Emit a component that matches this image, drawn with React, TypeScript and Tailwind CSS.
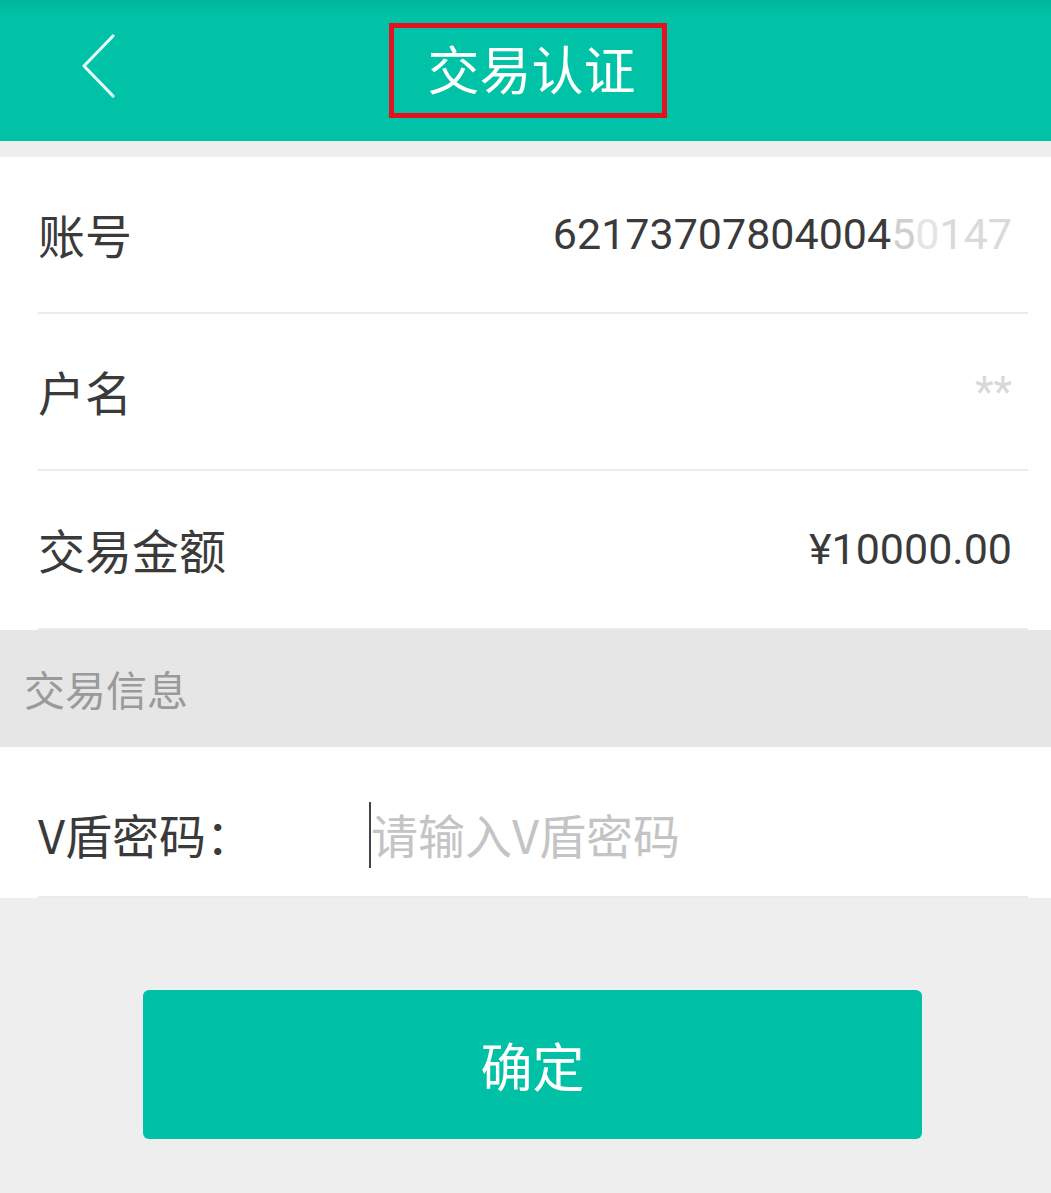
const cjk = "font-['Noto_Sans_CJK_SC',sans-serif]";

function InfoRow({ label, children, last }: { label: string; children: React.ReactNode; last?: boolean }) {
    return (
        <div className="bg-white pr-[23px] pl-[38px]">
            <div className={`flex h-[157px] items-center justify-between ${last ? '' : 'border-b-2 border-[#ebebeb]'}`}>
                <span className={`${cjk} text-[47px] text-[#3a3a3a]`}>{label}</span>
                <span className="pr-4 font-['Roboto',sans-serif] text-[43px] text-[#3a3a3a]">{children}</span>
            </div>
        </div>
    );
}

export default function App() {
    return (
        <div className={`flex min-h-[1193px] w-full flex-col bg-[#eeeeee] ${cjk}`}>
            {/* Header */}
            <header className="relative flex h-[141px] items-center justify-center bg-gradient-to-b from-[#00b59c] to-[#00c2a6] to-[12%]">
                <svg className="absolute top-[33px] left-[80px]" width="38" height="66" viewBox="0 0 38 66" fill="none">
                    <polyline points="33,3 4,33 33,63" stroke="#e6fbf7" strokeWidth="3.2" strokeLinecap="round" strokeLinejoin="round" />
                </svg>
                <div className="ml-[4px] flex h-[95px] w-[278px] items-center justify-center border-[5px] border-[#e4111f] pb-[6px] pl-2">
                    <span className="text-[52px] text-white">交易认证</span>
                </div>
            </header>

            <div className="h-4" />

            {/* Account info */}
            <InfoRow label="账号">
                62173707804004<span className="text-[#cfcfcf]">5</span>
                <span className="text-[#e4e4e4]">0</span>
                <span className="text-[#dadada]">147</span>
            </InfoRow>
            <InfoRow label="户名">
                <span className="text-[#d8d8d8]">**</span>
            </InfoRow>
            <InfoRow label="交易金额" last>
                ¥10000.00
            </InfoRow>

            <div className="h-[2px] bg-white pr-[23px] pl-[38px]">
                <div className="h-full bg-[#ececec]" />
            </div>

            {/* Section title */}
            <div className="flex h-[117px] items-center bg-[#e6e6e6] px-6">
                <span className="text-[41px] text-[#9a9a9a]">交易信息</span>
            </div>

            {/* Password input */}
            <div className="bg-white pr-[23px] pl-[38px]">
                <div className="flex h-[151px] items-center border-b-2 border-[#ebebeb] pt-[26px]">
                    <span className="w-[331px] text-[47px] text-[#3a3a3a]">V盾密码：</span>
                    <div className="flex items-center">
                        <div className="h-[66px] w-[2px] bg-[#444]" />
                        <span className="text-[47px] text-[#c4c4c4]">请输入V盾密码</span>
                    </div>
                </div>
            </div>

            {/* Confirm */}
            <div className="flex pt-[92px] pl-[143px]">
                <button className="flex h-[149px] w-[779px] items-center justify-center rounded-md bg-[#00c1a5] text-[52px] text-white">
                    确定
                </button>
            </div>
        </div>
    );
}
